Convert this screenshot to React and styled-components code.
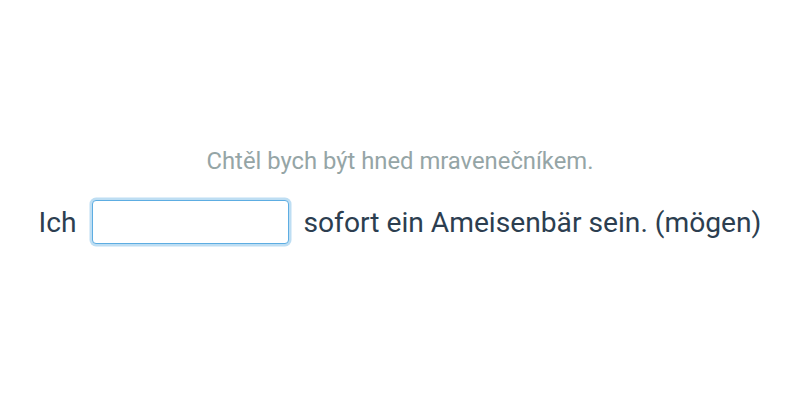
import React from "react";
import styled, { createGlobalStyle } from "styled-components";

const Global = createGlobalStyle`
  html, body { margin: 0; padding: 0; background: #ffffff; }
  body { font-family: Roboto, "Noto Sans", "Liberation Sans", sans-serif; }
  #root { height: 400px; }
`;

const Page = styled.div`
  box-sizing: border-box;
  height: 400px;
  padding-bottom: 9px;
  display: flex;
  flex-direction: column;
  align-items: center;
  justify-content: center;
  gap: 25px;
`;

const Hint = styled.div`
  font-size: 23.8px;
  color: #95a5a6;
  line-height: 28px;
`;

const Sentence = styled.div`
  display: flex;
  align-items: center;
  gap: 15px;
  font-size: 28.2px;
  color: #2c3e50;
  white-space: nowrap;
`;

const Blank = styled.input`
  box-sizing: border-box;
  width: 197px;
  height: 44px;
  border: 1.5px solid #5dade2;
  border-radius: 4px;
  outline: none;
  box-shadow: 0 0 0 2.5px rgba(93, 173, 226, 0.4);
  font: inherit;
  color: inherit;
  padding: 0 8px;
  background: #fff;
`;

export default function App() {
  return (
    <>
      <Global />
      <Page>
        <Hint>Chtěl bych být hned mravenečníkem.</Hint>
        <Sentence>
          <span>Ich</span>
          <Blank type="text" />
          <span>sofort ein Ameisenbär sein. (mögen)</span>
        </Sentence>
      </Page>
    </>
  );
}
